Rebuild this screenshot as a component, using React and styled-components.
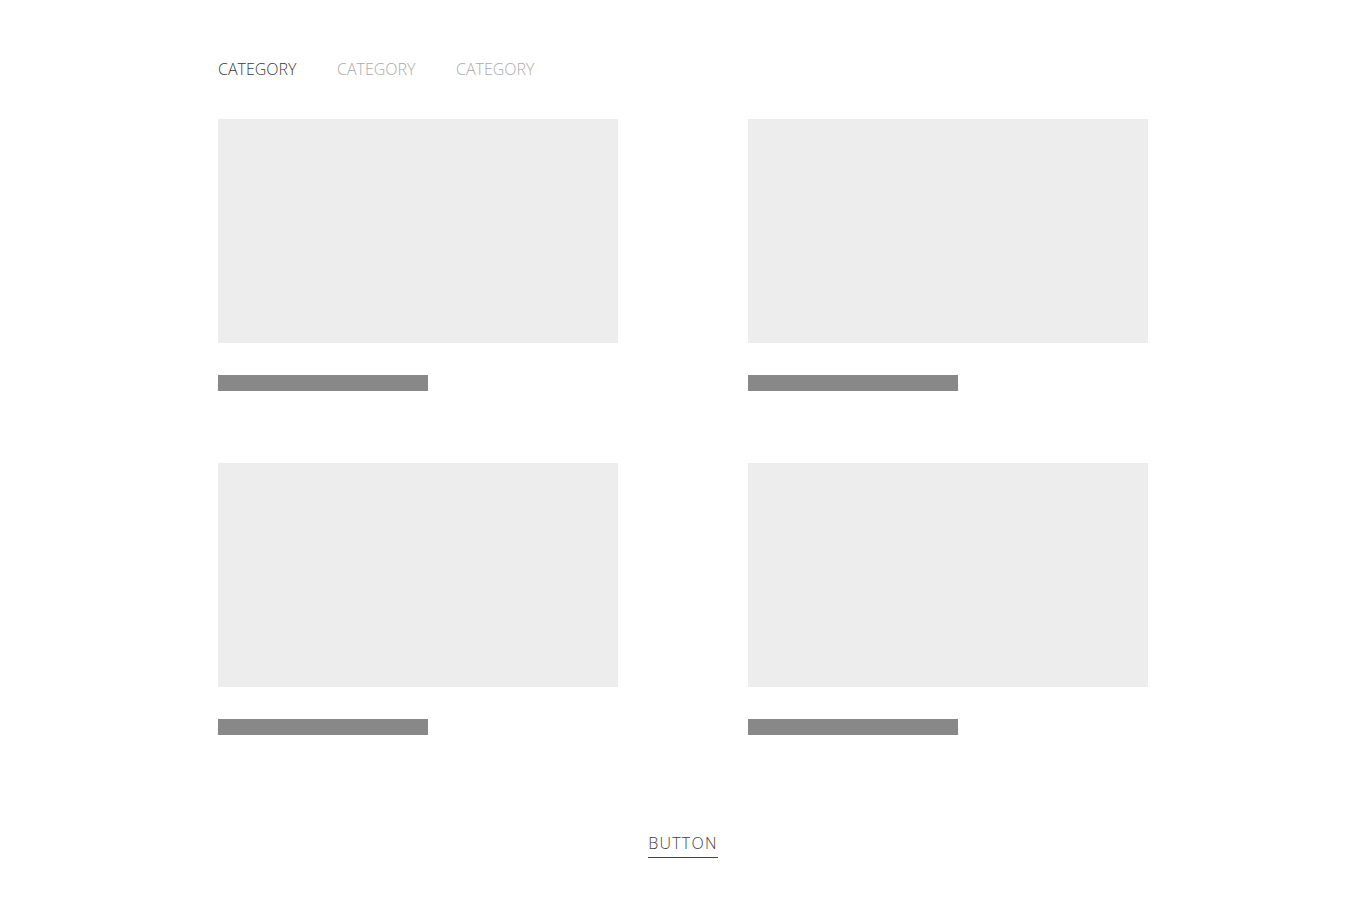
import React, { useState } from "react";
import styled, { createGlobalStyle } from "styled-components";

const GlobalStyle = createGlobalStyle`
  body {
    margin: 0;
    background: #fff;
    font-family: "Open Sans", "Liberation Sans", sans-serif;
  }
`;

const categories = ["CATEGORY", "CATEGORY", "CATEGORY"];
const items = [1, 2, 3, 4];

function App() {
  const [active, setActive] = useState(0);

  return (
    <>
      <GlobalStyle />
      <Page>
        <Tabs>
          {categories.map((c, i) => (
            <Tab key={i} $active={i === active} onClick={() => setActive(i)}>
              {c}
            </Tab>
          ))}
        </Tabs>
        <Grid>
          {items.map((n) => (
            <Card key={n}>
              <Thumb />
              <Caption />
            </Card>
          ))}
        </Grid>
        <Footer>
          <MoreButton>BUTTON</MoreButton>
        </Footer>
      </Page>
    </>
  );
}

export default App;

const Page = styled.div`
  width: 930px;
  margin: 0 auto;
  padding-top: 59px;
  padding-bottom: 60px;
`;

const Tabs = styled.nav`
  display: flex;
  gap: 40.5px;
  height: 20px;
  margin-bottom: 40px;
`;

const Tab = styled.span`
  font-size: 16px;
  font-weight: 300;
  line-height: 20px;
  color: ${(p) => (p.$active ? "#3a3a3a" : "#aaa")};
  cursor: pointer;
`;

const Grid = styled.div`
  display: grid;
  grid-template-columns: 400px 400px;
  column-gap: 130px;
  row-gap: 72px;
`;

const Card = styled.div`
  display: flex;
  flex-direction: column;
`;

const Thumb = styled.div`
  width: 400px;
  height: 224px;
  background: #ededed;
`;

const Caption = styled.div`
  width: 210px;
  height: 16px;
  margin-top: 32px;
  background: #888;
`;

const Footer = styled.div`
  display: flex;
  justify-content: center;
  margin-top: 98px;
`;

const MoreButton = styled.button`
  background: none;
  border: none;
  border-bottom: 1px solid #444;
  padding: 0 0 4px;
  font-family: inherit;
  font-size: 16px;
  font-weight: 300;
  letter-spacing: 1.2px;
  line-height: 20px;
  color: #3f3f3f;
  cursor: pointer;
`;
